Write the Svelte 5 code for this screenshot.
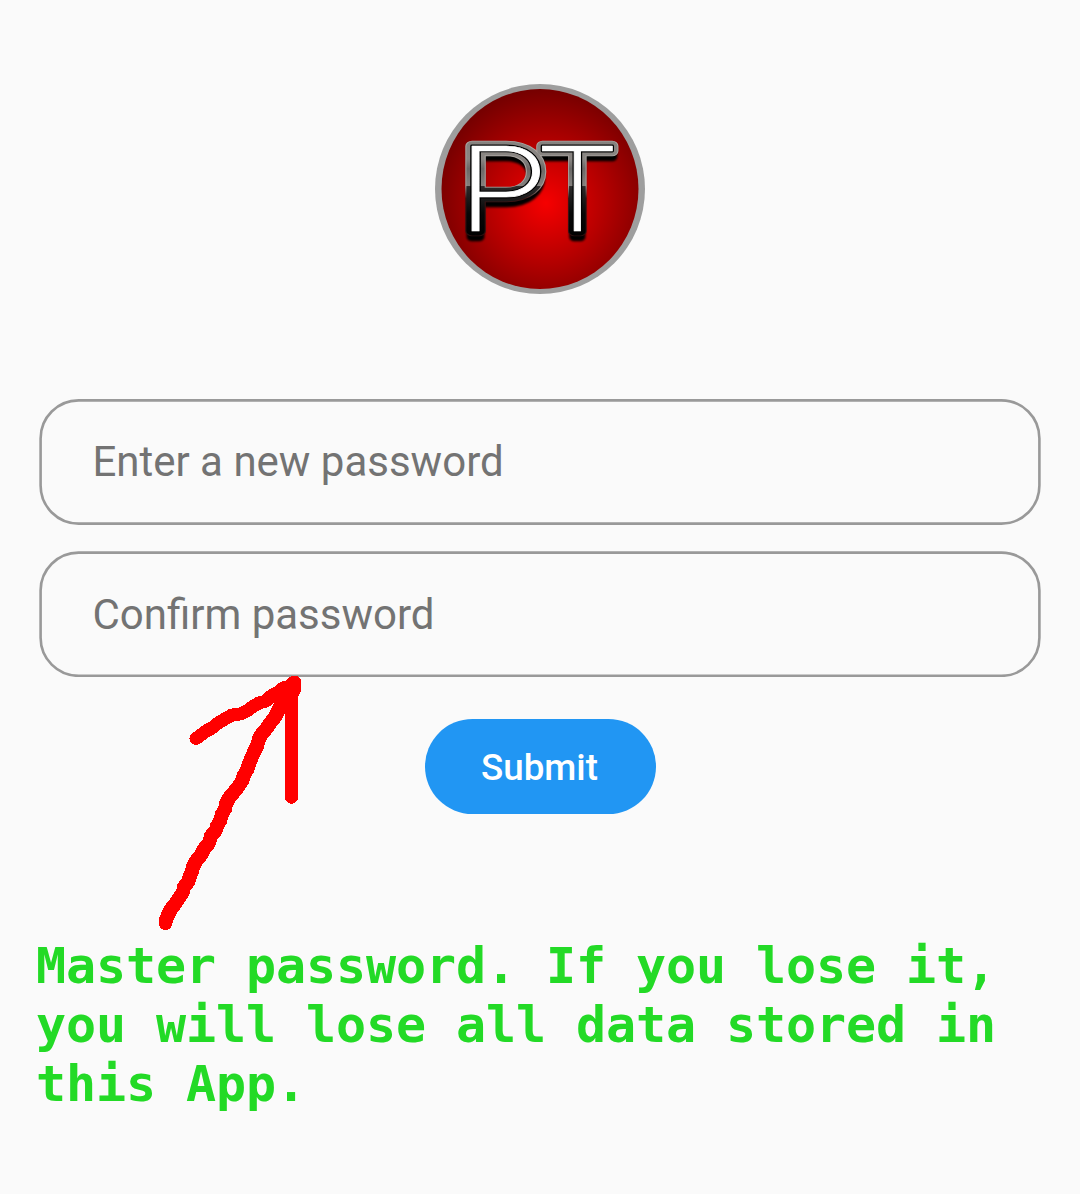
<script>
  let password = $state('');
  let confirmation = $state('');
</script>

<main class="screen">
  <svg class="logo" viewBox="0 0 210 210" role="img" aria-label="PT">
    <defs>
      <radialGradient id="disc" cx="0.53" cy="0.57" r="0.62">
        <stop offset="0" stop-color="#f60000" />
        <stop offset="0.45" stop-color="#b80000" />
        <stop offset="1" stop-color="#6a0000" />
      </radialGradient>
      <linearGradient id="metal" gradientUnits="userSpaceOnUse" x1="0" y1="-92" x2="0" y2="7">
        <stop offset="0" stop-color="#85817e" />
        <stop offset="0.2" stop-color="#8a8683" />
        <stop offset="0.3" stop-color="#6b6866" />
        <stop offset="0.475" stop-color="#85817e" />
        <stop offset="0.48" stop-color="#2c2a2a" />
        <stop offset="0.75" stop-color="#080808" />
        <stop offset="1" stop-color="#000" />
      </linearGradient>
      <linearGradient id="edge" gradientUnits="userSpaceOnUse" x1="0" y1="-92" x2="0" y2="7">
        <stop offset="0" stop-color="#aaa4a0" />
        <stop offset="0.475" stop-color="#a39d99" />
        <stop offset="0.6" stop-color="#3a1414" />
        <stop offset="1" stop-color="#2a1010" />
      </linearGradient>
      <filter id="soft" x="-10%" y="-10%" width="120%" height="130%">
        <feGaussianBlur stdDeviation="1.1" />
      </filter>
    </defs>
    <circle cx="105" cy="105" r="105" fill="#9e9e9e" />
    <ellipse cx="105" cy="105" rx="98.5" ry="100" fill="url(#disc)" />
    <g class="letters">
      <g filter="url(#soft)"><use class="shade" href="#monogram" y="6" /></g>
      <use class="edge" href="#monogram" />
      <use class="rim" href="#monogram" />
      <use class="bevel" href="#monogram" />
      <g class="face">
        <g id="monogram">
          <text transform="translate(21.3 147) scale(1.29 1)">P</text>
          <text transform="translate(99.5 147) scale(1.17 1)">T</text>
        </g>
      </g>
    </g>
  </svg>

  <form class="form" onsubmit={(e) => e.preventDefault()}>
    <div class="field first">
      <svg class="frame" viewBox="0 0 1002 126"><rect x="1.6" y="1.4" width="998.8" height="123.2" rx="38" /></svg>
      <input type="text" placeholder="Enter a new password" bind:value={password} />
    </div>
    <div class="field">
      <svg class="frame" viewBox="0 0 1002 126"><rect x="1.6" y="1.6" width="998.8" height="123.2" rx="38" /></svg>
      <input type="text" placeholder="Confirm password" bind:value={confirmation} />
    </div>
    <button type="submit">Submit</button>
  </form>

  <p class="note">Master password. If you lose it,<br />you will lose all data stored in<br />this App.</p>

  <!-- Hand-drawn arrow pointing at the confirmation field -->
  <svg class="arrow" viewBox="0 0 170 275" shape-rendering="crispEdges">
    <path class="shaft" d="M15.500 258V256L18 250L21 244L25 239L29 233L33 227L34 222L38 217L40 211L42 206L43 202L46 196L51 190L54 184L59 178L61 171L66 165L67 161L70 156L72 149L75 144L76 139L79 133L84 127L88 122L92 116L94 110L97 105L99 99L101 94L104 87L107 81L109 74L111 70L116 64L121 57L125 52L128 46L132 37L138 27L143 19" />
    <path d="M46 73.500L51 70L56 66L62 63L68 58L75 54L82 50L90 49L97 46L102 42L109 38L116 36L121 31L127 28L133 23L138 22L144 17" />
    <path d="M144.500 17V25L141.500 30V132.300" />
  </svg>
</main>

<style>
  :global(body) {
    background: #fafafa;
  }
  .screen {
    position: relative;
    box-sizing: border-box;
    width: 1080px;
    height: 1194px;
    padding: 84px 39px 0;
    display: flex;
    flex-direction: column;
    align-items: center;
    overflow: hidden;
    background: #fafafa;
    font-family: Roboto, 'Liberation Sans', sans-serif;
  }
  .logo {
    width: 210px;
    height: 210px;
    flex: none;
  }
  .letters {
    font-family: Inter, sans-serif;
    font-weight: 200;
    font-size: 117px;
    stroke-linejoin: round;
  }
  .shade {
    fill: #000;
    stroke: #000;
    stroke-width: 8.500px;
  }
  .edge {
    fill: url(#edge);
    stroke: url(#edge);
    stroke-width: 10.500px;
  }
  .rim {
    fill: url(#metal);
    stroke: url(#metal);
    stroke-width: 8.800px;
  }
  .bevel {
    fill: #000;
    stroke: #000;
    stroke-width: 2.900px;
  }
  .face {
    fill: #fff;
    stroke: #fff;
    stroke-width: 0.700px;
  }
  .form {
    width: 1002px;
    margin-top: 105px;
    display: flex;
    flex-direction: column;
    align-items: center;
    gap: 26px;
  }
  .field {
    width: 1002px;
    height: 126px;
    display: grid;
  }
  .frame,
  .field input {
    grid-area: 1 / 1;
    width: 1002px;
    height: 126px;
  }
  .frame rect {
    fill: none;
    stroke: #999;
    stroke-width: 2.6px;
  }
  .field input {
    box-sizing: border-box;
    margin: 0;
    padding: 0 51px 0 53.400px;
    border: 0;
    outline: 0;
    background: transparent;
    color: #212121;
    font: 400 42px Roboto, sans-serif;
  }
  .field.first input {
    padding-bottom: 2px;
  }
  .field input::placeholder {
    color: #737373;
    opacity: 1;
  }
  button {
    width: 231px;
    height: 95px;
    margin: 16px 0 0;
    padding: 2px 1px 0 0;
    border: 0;
    border-radius: 47.500px;
    background: #2196f3;
    color: #fff;
    font: 500 36.750px Roboto, sans-serif;
  }
  .note {
    align-self: stretch;
    margin: 123px -39px 0 -3px;
    color: #23da26;
    font: 700 50px/59px 'DejaVu Sans Mono', monospace;
    letter-spacing: -0.100px;
    white-space: nowrap;
  }
  .arrow {
    position: absolute;
    left: 150px;
    top: 665px;
    width: 170px;
    height: 275px;
    fill: none;
    stroke: #f00;
    stroke-width: 13px;
    stroke-linecap: round;
    stroke-linejoin: round;
    pointer-events: none;
  }
  .shaft {
    stroke-width: 14px;
  }
</style>
